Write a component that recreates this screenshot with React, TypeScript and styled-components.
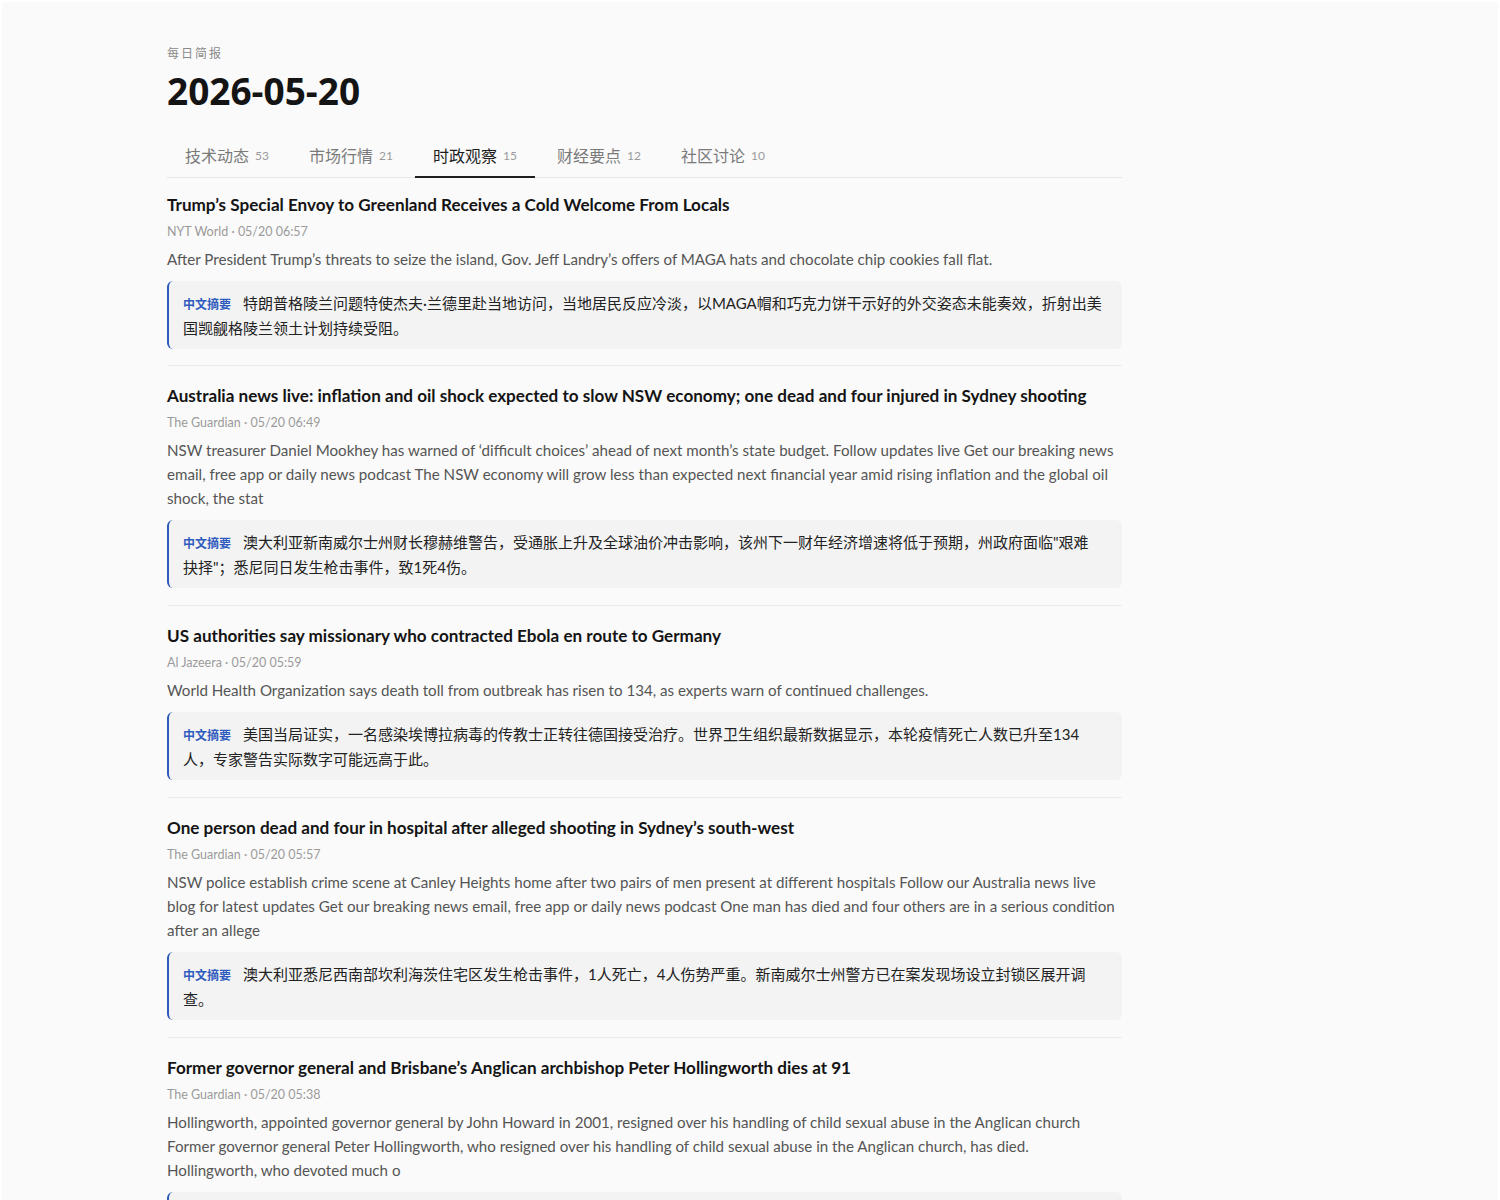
import React from "react";
import styled, { createGlobalStyle } from "styled-components";

const Global = createGlobalStyle`
  html, body { margin: 0; padding: 0; background: #ffffff; }
  body {
    font-family: "Lato", "Noto Sans CJK SC", sans-serif;
    color: #222;
  }
`;

const Frame = styled.div`
  margin: 2px 2px 0 2px;
  background: #fafafa;
  min-height: 1198px;
`;

const Page = styled.main`
  width: 955px;
  padding: 44px 0 0 165px;
`;

const Kicker = styled.div`
  font-size: 12px;
  letter-spacing: 2px;
  color: #8a8a8a;
  line-height: 16px;
`;

const DateTitle = styled.h1`
  margin: 5px 0 0 0;
  font-size: 37px;
  line-height: 48px;
  font-weight: 700;
  color: #141414;
  font-family: "Open Sans", "Noto Sans CJK SC", sans-serif;
`;

const TabBar = styled.nav`
  display: flex;
  gap: 4px;
  margin-top: 19px;
  border-bottom: 1px solid #e6e6e6;
`;

const Tab = styled.div<{ $active?: boolean }>`
  width: 120px;
  box-sizing: border-box;
  padding: 0 18px;
  height: 44px;
  display: flex;
  align-items: center;
  gap: 6px;
  font-size: 16px;
  color: ${(p) => (p.$active ? "#1e1e1e" : "#7a7a7a")};
  border-bottom: 2px solid ${(p) => (p.$active ? "#1e1e1e" : "transparent")};
  margin-bottom: -1px;
  font-family: "Noto Sans CJK SC", sans-serif;
`;

const Count = styled.span`
  font-size: 12px;
  color: #9a9a9a;
  font-family: "Lato", sans-serif;
`;

const List = styled.section``;

const Article = styled.article`
  padding: 18px 0 17px;
  border-bottom: 1px solid #ececec;
  &:first-child { padding: 15px 0 16px; }
`;

const Title = styled.h2`
  margin: 0;
  font-size: 17.1px;
  line-height: 24px;
  font-weight: 700;
  color: #141414;
`;

const Meta = styled.div`
  margin-top: 6px;
  font-size: 12.5px;
  line-height: 18px;
  color: #9a9a9a;
`;

const Summary = styled.p`
  margin: 6px 0 0 0;
  font-size: 15.13px;
  line-height: 24px;
  color: #555;
`;

const ZhBox = styled.div`
  margin-top: 10px;
  background: #f3f3f3;
  border-left: 2px solid #2f5bbf;
  border-radius: 6px;
  padding: 10px 19px 9px 14px;
  font-size: 15px;
  line-height: 24px;
  color: #222;
  font-family: "Lato", "Noto Sans CJK SC", sans-serif;
`;

const ZhLabel = styled.span`
  display: inline-block;
  font-size: 12px;
  font-weight: 700;
  color: #2f5bbf;
  margin-right: 12px;
  font-family: "Noto Sans CJK SC", sans-serif;
`;

const ZhText = styled.span``;

type Item = { title: string; source: string; time: string; summary: string; zh: string };

const tabs = [
  { name: "技术动态", count: 53 },
  { name: "市场行情", count: 21 },
  { name: "时政观察", count: 15, active: true },
  { name: "财经要点", count: 12 },
  { name: "社区讨论", count: 10 },
];

const items: Item[] = [
  {
    title: "Trump’s Special Envoy to Greenland Receives a Cold Welcome From Locals",
    source: "NYT World",
    time: "05/20 06:57",
    summary:
      "After President Trump’s threats to seize the island, Gov. Jeff Landry’s offers of MAGA hats and chocolate chip cookies fall flat.",
    zh: "特朗普格陵兰问题特使杰夫·兰德里赴当地访问，当地居民反应冷淡，以MAGA帽和巧克力饼干示好的外交姿态未能奏效，折射出美国觊觎格陵兰领土计划持续受阻。",
  },
  {
    title:
      "Australia news live: inflation and oil shock expected to slow NSW economy; one dead and four injured in Sydney shooting",
    source: "The Guardian",
    time: "05/20 06:49",
    summary:
      "NSW treasurer Daniel Mookhey has warned of ‘difficult choices’ ahead of next month’s state budget. Follow updates live Get our breaking news email, free app or daily news podcast The NSW economy will grow less than expected next financial year amid rising inflation and the global oil shock, the stat",
    zh: "澳大利亚新南威尔士州财长穆赫维警告，受通胀上升及全球油价冲击影响，该州下一财年经济增速将低于预期，州政府面临\"艰难抉择\"；悉尼同日发生枪击事件，致1死4伤。",
  },
  {
    title: "US authorities say missionary who contracted Ebola en route to Germany",
    source: "Al Jazeera",
    time: "05/20 05:59",
    summary:
      "World Health Organization says death toll from outbreak has risen to 134, as experts warn of continued challenges.",
    zh: "美国当局证实，一名感染埃博拉病毒的传教士正转往德国接受治疗。世界卫生组织最新数据显示，本轮疫情死亡人数已升至134人，专家警告实际数字可能远高于此。",
  },
  {
    title: "One person dead and four in hospital after alleged shooting in Sydney’s south-west",
    source: "The Guardian",
    time: "05/20 05:57",
    summary:
      "NSW police establish crime scene at Canley Heights home after two pairs of men present at different hospitals Follow our Australia news live blog for latest updates Get our breaking news email, free app or daily news podcast One man has died and four others are in a serious condition after an allege",
    zh: "澳大利亚悉尼西南部坎利海茨住宅区发生枪击事件，1人死亡，4人伤势严重。新南威尔士州警方已在案发现场设立封锁区展开调查。",
  },
  {
    title: "Former governor general and Brisbane’s Anglican archbishop Peter Hollingworth dies at 91",
    source: "The Guardian",
    time: "05/20 05:38",
    summary:
      "Hollingworth, appointed governor general by John Howard in 2001, resigned over his handling of child sexual abuse in the Anglican church Former governor general Peter Hollingworth, who resigned over his handling of child sexual abuse in the Anglican church, has died. Hollingworth, who devoted much o",
    zh: "澳大利亚前总督、布里斯班圣公会大主教彼得·霍林沃思去世，享年91岁。他曾因处理教会儿童性侵问题不当而辞去总督职务。",
  },
];

export default function App() {
  return (
    <>
      <Global />
      <Frame>
        <Page>
          <Kicker>每日简报</Kicker>
          <DateTitle>2026-05-20</DateTitle>
          <TabBar>
            {tabs.map((t) => (
              <Tab key={t.name} $active={t.active}>
                {t.name}
                <Count>{t.count}</Count>
              </Tab>
            ))}
          </TabBar>
          <List>
            {items.map((it) => (
              <Article key={it.title}>
                <Title>{it.title}</Title>
                <Meta>
                  {it.source} · {it.time}
                </Meta>
                <Summary>{it.summary}</Summary>
                <ZhBox>
                  <ZhLabel>中文摘要</ZhLabel>
                  <ZhText>{it.zh}</ZhText>
                </ZhBox>
              </Article>
            ))}
          </List>
        </Page>
      </Frame>
    </>
  );
}
